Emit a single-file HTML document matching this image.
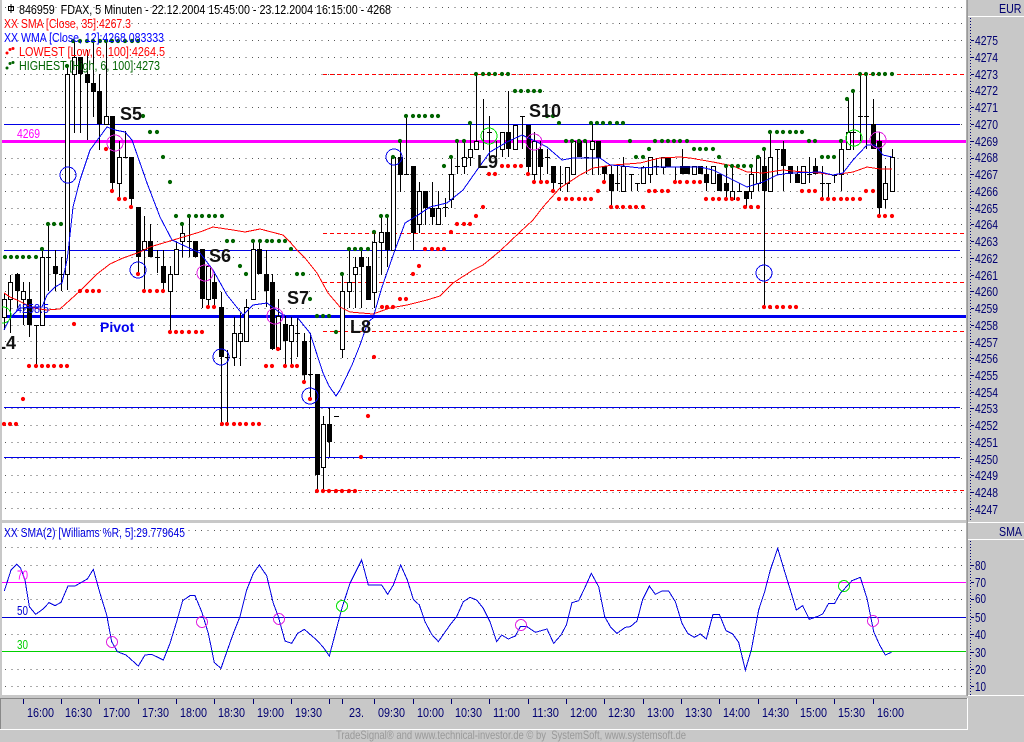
<!DOCTYPE html>
<html><head><meta charset="utf-8"><title>FDAX</title>
<style>
html,body{margin:0;padding:0;background:#c8c8c8;width:1024px;height:742px;overflow:hidden}
svg{display:block}
text{font-family:"Liberation Sans",Arial,sans-serif;font-size:13px;white-space:pre}
.b{font-weight:bold;font-size:18px;fill:#111}
.a text,.a{fill:#000070}
</style></head><body>
<svg width="1024" height="742" viewBox="0 0 1024 742" xmlns="http://www.w3.org/2000/svg">
<rect width="1024" height="742" fill="#c8c8c8"/>
<rect x="2" y="0" width="965" height="520" fill="#fff"/>
<rect x="2" y="523" width="965" height="172" fill="#fff"/>

<!-- dotted grids -->
<path shape-rendering="crispEdges" stroke="#555" stroke-width="1" stroke-dasharray="1 5.33" fill="none" d="M5 7.5H965M5 23.5H965M5 40.5H965M5 57.5H965M5 74.5H965M5 91.5H965M5 107.5H965M5 124.5H965M5 141.5H965M5 158.5H965M5 174.5H965M5 191.5H965M5 208.5H965M5 224.5H965M5 241.5H965M5 257.5H965M5 274.5H965M5 291.5H965M5 308.5H965M5 325.5H965M5 341.5H965M5 358.5H965M5 375.5H965M5 392.5H965M5 408.5H965M5 425.5H965M5 442.5H965M5 458.5H965M5 475.5H965M5 492.5H965M5 508.5H965M5 530.5H965M5 547.5H965M5 565.5H965M5 599.5H965M5 634.5H965M5 669.5H965M5 686.5H965"/>

<!-- horizontal levels -->
<path shape-rendering="crispEdges" stroke="#0000e6" stroke-width="1" fill="none" d="M4 124.5H960M4 250.5H960M4 407.5H960M4 457.5H960"/>
<path shape-rendering="crispEdges" stroke="#f00" stroke-width="1" stroke-dasharray="4 3" fill="none" d="M323 74.5H966M323 233.5H966M323 282.5H966M323 331.5H966M323 490.5H966"/>
<rect x="1" y="140" width="965" height="3" fill="#ff00ff"/>
<rect x="1" y="315" width="965" height="3" fill="#0000f0"/>

<!-- wicks -->
<path shape-rendering="crispEdges" stroke="#000" stroke-width="1" fill="none" d="M4.5 293V330M10.5 275V333M17.5 273V308M23.5 282V325M29.5 282V337M36.5 325V365M34 325.5h5M42.5 250V325M48.5 224V291M46 257.5h5M55.5 250V291M61.5 257V291M59 274.5h5M67.5 65V290M74.5 40V133M80.5 57V133M87.5 50V140M93.5 40V117M99.5 74V150M106.5 40V124M112.5 116V190M119.5 141V198M125.5 131V157M123 157.5h5M131.5 157V207M138.5 207V275M144.5 216V290M150.5 224V257M157.5 250V273M155 257.5h5M163.5 250V291M170.5 266V332M176.5 242V274M182.5 224V257M189.5 217V257M187 241.5h5M195.5 241V257M202.5 249V308M208.5 266V308M214.5 274V308M221.5 292V424M227.5 350V424M225 357.5h5M234.5 317V366M240.5 313V366M246.5 299V341M253.5 241V299M259.5 241V274M266.5 250V307M272.5 274V350M278.5 299V349M285.5 316V367M291.5 317V367M297.5 318V357M295 333.5h5M304.5 333V382M310.5 333V397M308 374.5h5M317.5 374V490M323.5 416V491M329.5 408V457M334 416.5h5M342.5 273V358M349.5 249V308M355.5 257V308M361.5 249V308M368.5 257V300M374.5 232V308M381.5 216V275M387.5 216V267M393.5 157V250M400.5 140V192M406.5 116V174M404 174.5h5M413.5 166V250M419.5 182V233M425.5 191V225M432.5 182V225M438.5 191V224M445.5 198V217M443 207.5h5M451.5 157V208M457.5 141V174M455 166.5h5M464.5 141V174M470.5 123V166M476.5 74V149M483.5 99V150M489.5 116V157M487 132.5h5M496.5 141V157M502.5 132V157M508.5 91V157M515.5 125V149M522.5 116V149M520 116.5h5M528.5 125V175M534.5 132V182M540.5 141V182M547.5 149V174M545 157.5h5M553.5 166V191M560.5 166V191M558 183.5h5M567.5 167V192M573.5 141V175M579.5 141V157M586.5 141V174M584 157.5h5M592.5 123V175M598.5 141V175M604.5 166V183M611.5 166V207M617.5 166V191M615 183.5h5M623.5 157V191M631.5 174V191M629 174.5h5M637.5 183V191M635 183.5h5M643.5 166V183M650.5 157V183M656.5 158V175M654 166.5h5M663.5 157V174M668.5 157V167M675.5 167V182M682.5 149V174M706.5 166V191M719.5 174V191M726.5 166V199M732.5 166V199M739.5 183V191M737 191.5h5M746.5 191V207M751.5 166V199M758.5 157V191M764.5 149V307M770.5 132V191M777.5 149V175M775 149.5h5M783.5 141V191M790.5 166V183M797.5 166V183M809.5 157V183M807 174.5h5M815.5 158V174M822.5 166V198M820 183.5h5M828.5 183V198M826 183.5h5M834.5 175V183M832 175.5h5M841.5 141V191M848.5 99V150M853.5 91V150M851 132.5h5M860.5 74V141M858 116.5h5M866.5 74V149M864 116.5h5M873.5 99V149M879.5 132V215M885.5 166V208M892.5 149V191"/>

<!-- white bodies -->
<path shape-rendering="crispEdges" stroke="#000" stroke-width="1" fill="#fff" d="M2.5 299.5h4v18h-4zM8.5 282.5h4v17h-4zM21.5 291.5h4v8h-4zM40.5 257.5h4v68h-4zM65.5 74.5h4v200h-4zM72.5 57.5h4v17h-4zM104.5 116.5h4v8h-4zM117.5 157.5h4v26h-4zM142.5 241.5h4v8h-4zM168.5 274.5h4v17h-4zM174.5 249.5h4v25h-4zM180.5 233.5h4v8h-4zM206.5 266.5h4v33h-4zM232.5 333.5h4v24h-4zM238.5 333.5h4v8h-4zM244.5 307.5h4v34h-4zM251.5 249.5h4v50h-4zM276.5 316.5h4v33h-4zM289.5 325.5h4v16h-4zM321.5 424.5h4v43h-4zM340.5 291.5h4v58h-4zM347.5 282.5h4v9h-4zM353.5 267.5h4v7h-4zM372.5 242.5h4v50h-4zM379.5 232.5h4v10h-4zM391.5 157.5h4v93h-4zM417.5 191.5h4v33h-4zM436.5 208.5h4v16h-4zM449.5 174.5h4v25h-4zM462.5 157.5h4v9h-4zM468.5 149.5h4v8h-4zM474.5 141.5h4v8h-4zM500.5 132.5h4v17h-4zM513.5 125.5h4v24h-4zM532.5 141.5h4v33h-4zM565.5 167.5h4v16h-4zM571.5 141.5h4v33h-4zM590.5 141.5h4v8h-4zM621.5 166.5h4v25h-4zM641.5 167.5h4v16h-4zM648.5 157.5h4v17h-4zM661.5 157.5h4v10h-4zM692.5 166.5h4v8h-4zM711.5 166.5h4v17h-4zM730.5 191.5h4v8h-4zM749.5 174.5h4v17h-4zM756.5 157.5h4v26h-4zM768.5 157.5h4v34h-4zM801.5 166.5h4v17h-4zM839.5 149.5h4v25h-4zM846.5 132.5h4v17h-4zM883.5 183.5h4v16h-4zM890.5 157.5h4v34h-4z"/>

<!-- black bodies -->
<path shape-rendering="crispEdges" fill="#000" d="M15 274h5v17h-5zM27 299h5v26h-5zM53 266h5v8h-5zM78 57h5v17h-5zM85 74h5v9h-5zM91 83h5v9h-5zM97 91h5v33h-5zM110 116h5v67h-5zM129 157h5v42h-5zM136 207h5v50h-5zM148 241h5v16h-5zM161 266h5v17h-5zM193 241h5v16h-5zM200 249h5v50h-5zM212 282h5v17h-5zM219 307h5v50h-5zM257 249h5v25h-5zM264 274h5v17h-5zM270 282h5v67h-5zM283 324h5v17h-5zM302 341h5v34h-5zM315 374h5v101h-5zM327 424h5v18h-5zM359 257h5v10h-5zM366 266h5v34h-5zM385 232h5v18h-5zM398 157h5v18h-5zM411 166h5v67h-5zM423 191h5v17h-5zM430 208h5v9h-5zM506 132h5v17h-5zM526 125h5v42h-5zM538 149h5v18h-5zM551 166h5v17h-5zM577 141h5v16h-5zM596 141h5v17h-5zM602 166h5v8h-5zM609 174h5v17h-5zM666 157h5v10h-5zM680 166h5v8h-5zM685 166h5v8h-5zM698 166h5v8h-5zM704 174h5v9h-5zM717 174h5v17h-5zM724 183h5v8h-5zM744 191h5v8h-5zM762 166h5v25h-5zM781 149h5v17h-5zM788 166h5v8h-5zM795 174h5v9h-5zM813 166h5v8h-5zM871 124h5v25h-5zM877 141h5v67h-5z"/>

<!-- SMA red / WMA blue -->
<polyline shape-rendering="crispEdges" fill="none" stroke="#f00" stroke-width="1" points="4,293 10,297 17,300 23,303 33,308 47,310 60,309 80,291 97,274 110,264 123,258 140,252 150,247 180,238 200,232 213,227 233,230 245,232 260,229 283,235 290,242 297,250 305,258 317,273 328,293 340,307 350,312 373,314 390,308 407,305 427,300 440,296 453,283 473,270 483,265 500,251 520,232 533,220 543,207 560,188 580,175 593,168 613,165 640,163 660,158 680,157 690,158 713,162 733,166 747,172 763,173 783,170 803,172 820,173 833,175 853,172 867,167 880,169 892,169"/>
<polyline shape-rendering="crispEdges" fill="none" stroke="#0000f0" stroke-width="1" points="4,330 10,318 20,308 33,307 42,307 47,295 55,287 62,283 67,260 68,253 73,207 80,180 90,150 107,127 115,130 125,132 132,140 147,183 160,217 172,240 187,247 200,253 213,270 227,295 243,315 253,305 267,303 283,315 297,317 310,333 323,373 329,386 336,396 340,390 352,365 360,345 368,322 373,318 382,287 395,250 405,223 418,215 430,207 447,203 463,190 477,170 490,152 507,142 522,135 533,140 547,147 562,160 573,158 588,158 600,158 610,165 623,166 640,168 657,167 680,167 700,167 713,170 727,177 747,187 763,182 777,175 790,173 820,172 833,175 843,173 853,160 867,145 875,145 883,155 892,157"/>

<!-- green dots -->
<path fill="none" stroke="#006400" stroke-width="4.2" stroke-linecap="round" d="M73 41h0M80 41h0M87 41h0M93 41h0M100 41h0M106 41h0M112 41h0M118 41h0M125 41h0M132 41h0M138 41h0M67 66h0M143 116h0M150 132h0M157 132h0M163 157h0M170 182h0M48 224h0M54 224h0M61 224h0M176 216h0M189 216h0M196 216h0M202 216h0M209 216h0M215 216h0M222 216h0M182 224h0M42 249h0M227 241h0M233 241h0M253 241h0M260 241h0M267 241h0M272 241h0M279 241h0M285 241h0M291 249h0M5 257h0M11 257h0M17 257h0M23 257h0M29 257h0M36 257h0M240 266h0M246 274h0M297 274h0M303 274h0M310 299h0M317 316h0M323 316h0M329 316h0M336 332h0M342 274h0M349 249h0M355 249h0M361 249h0M368 249h0M374 232h0M381 216h0M387 216h0M393 157h0M400 141h0M406 116h0M413 116h0M419 116h0M425 116h0M432 116h0M438 116h0M444 166h0M451 157h0M457 141h0M464 141h0M470 123h0M476 74h0M483 74h0M489 74h0M495 74h0M502 74h0M508 74h0M515 91h0M521 91h0M528 91h0M534 91h0M540 91h0M547 116h0M553 116h0M559 123h0M566 141h0M572 141h0M579 141h0M585 141h0M591 123h0M597 123h0M603 123h0M610 123h0M617 123h0M623 123h0M630 141h0M636 157h0M643 157h0M649 149h0M655 141h0M662 141h0M668 141h0M674 141h0M680 141h0M687 141h0M694 149h0M700 149h0M706 149h0M713 149h0M719 157h0M726 166h0M732 166h0M738 166h0M744 166h0M751 166h0M758 157h0M764 149h0M770 132h0M777 132h0M783 132h0M790 132h0M796 132h0M802 132h0M809 141h0M815 141h0M822 157h0M828 157h0M834 157h0M841 141h0M847 99h0M853 91h0M860 74h0M866 74h0M873 74h0M879 74h0M885 74h0M892 74h0"/>

<!-- red dots -->
<path fill="none" stroke="#f00" stroke-width="4.2" stroke-linecap="round" d="M106 149h0M112 191h0M119 199h0M125 199h0M131 207h0M138 274h0M80 291h0M87 291h0M93 291h0M99 291h0M144 291h0M150 291h0M157 291h0M163 291h0M74 324h0M170 332h0M176 332h0M182 332h0M189 332h0M196 332h0M202 332h0M208 307h0M214 307h0M29 366h0M36 366h0M42 366h0M48 366h0M54 366h0M61 366h0M67 366h0M23 399h0M4 424h0M10 424h0M16 424h0M222 424h0M227 424h0M234 424h0M240 424h0M246 424h0M253 424h0M259 424h0M266 366h0M272 366h0M278 349h0M285 366h0M292 366h0M297 366h0M304 382h0M310 399h0M317 491h0M323 491h0M329 491h0M336 491h0M342 491h0M349 491h0M355 491h0M361 457h0M368 416h0M374 357h0M382 307h0M387 307h0M393 307h0M400 299h0M406 299h0M413 274h0M419 266h0M425 249h0M432 249h0M438 249h0M444 249h0M451 232h0M457 224h0M464 224h0M470 224h0M476 216h0M483 207h0M489 174h0M495 174h0M502 166h0M508 166h0M515 166h0M521 166h0M528 174h0M534 182h0M541 182h0M547 182h0M553 191h0M559 199h0M566 199h0M572 199h0M579 199h0M585 199h0M591 199h0M598 191h0M604 182h0M611 207h0M617 207h0M623 207h0M630 207h0M636 207h0M643 207h0M649 191h0M655 191h0M662 191h0M668 191h0M675 182h0M680 182h0M687 182h0M694 182h0M700 182h0M706 199h0M713 199h0M719 199h0M726 199h0M732 199h0M738 199h0M745 207h0M751 207h0M758 207h0M764 307h0M770 307h0M777 307h0M783 307h0M790 307h0M796 307h0M802 191h0M809 191h0M815 191h0M822 199h0M828 199h0M834 199h0M841 199h0M847 199h0M853 199h0M860 199h0M866 191h0M873 191h0M879 216h0M885 216h0M892 216h0"/>

<!-- signal circles -->
<g fill="none" stroke-width="1" shape-rendering="crispEdges">
<g stroke="#0000f0"><circle cx="68" cy="175" r="8"/><circle cx="138" cy="270" r="8"/><circle cx="221" cy="357" r="8"/><circle cx="310" cy="396" r="8"/><circle cx="394" cy="157" r="8"/><circle cx="764" cy="273" r="8"/></g>
<g stroke="#e020e0"><circle cx="115" cy="143" r="8"/><circle cx="205" cy="273" r="8"/><circle cx="275" cy="316" r="8"/><circle cx="534" cy="142" r="8"/><circle cx="878" cy="140" r="8"/></g>
<g stroke="#00e000"><circle cx="3" cy="315" r="8"/><circle cx="489" cy="136" r="8"/><circle cx="854" cy="138" r="8"/></g>
</g>

<!-- legend -->
<path shape-rendering="crispEdges" d="M8.5 6.5h5v4h-5zM11 4v9" fill="none" stroke="#000" stroke-width="1"/>
<text x="19" y="14" fill="#000" textLength="372" lengthAdjust="spacingAndGlyphs">846959  FDAX, 5 Minuten - 22.12.2004 15:45:00 - 23.12.2004 16:15:00 - 4268</text>
<text x="4" y="28" fill="#f00" textLength="127" lengthAdjust="spacingAndGlyphs">XX SMA [Close, 35]:4267.3</text>
<text x="4" y="42" fill="#00f" textLength="160" lengthAdjust="spacingAndGlyphs">XX WMA [Close, 12]:4268.083333</text>
<path d="M7 53h0M10 49.5h0M13 48.5h0" stroke="#f00" stroke-width="3" stroke-linecap="round" fill="none"/>
<text x="19" y="56" fill="#f00" textLength="146" lengthAdjust="spacingAndGlyphs">LOWEST [Low, 6, 100]:4264.5</text>
<path d="M7 68h0M10 63.5h0M13 62.5h0" stroke="#006400" stroke-width="3" stroke-linecap="round" fill="none"/>
<text x="19" y="70" fill="#006400" textLength="141" lengthAdjust="spacingAndGlyphs">HIGHEST [High, 6, 100]:4273</text>

<text x="17" y="138" fill="#ff00ff" textLength="23" lengthAdjust="spacingAndGlyphs">4269</text>
<text x="16" y="313" fill="#0000f0" textLength="33" lengthAdjust="spacingAndGlyphs">4258.5</text>
<text x="100" y="332" fill="#0000f0" font-weight="bold" style="font-size:14px">Pivot</text>
<text class="b" x="120" y="120">S5</text>
<text class="b" x="209" y="262">S6</text>
<text class="b" x="287" y="304">S7</text>
<text class="b" x="529" y="117">S10</text>
<text class="b" x="477" y="168">L9</text>
<text class="b" x="350" y="333">L8</text>
<text class="b" x="-5" y="349">L4</text>

<!-- lower panel -->
<rect x="2" y="582" width="964" height="1" fill="#ff00ff"/>
<rect x="2" y="617" width="964" height="1" fill="#0000d0"/>
<rect x="2" y="651" width="964" height="1" fill="#00d000"/>
<g transform="translate(0,510) scale(.33333)" fill="none" stroke="#0000e0" stroke-width="1" shape-rendering="crispEdges">
<polyline vector-effect="non-scaling-stroke" points="13,243 33,180 50,163 62,175 75,210 88,290 107,313 128,298 147,278 165,287 183,277 204,228 225,228 262,207 280,178 300,250 320,315 335,395 352,425 378,435 415,468 435,435 455,433 490,450 510,400 530,335 548,272 570,257 585,257 605,305 625,370 643,458 663,475 700,370 720,320 740,240 760,190 778,165 800,197 820,280 835,320 855,393 875,400 893,370 913,358 950,390 970,412 988,438 1027,290 1050,220 1085,150 1105,225 1145,225 1163,253 1180,225 1202,165 1222,210 1240,268 1258,285 1275,335 1295,373 1315,395 1350,345 1370,320 1390,275 1410,262 1430,270 1450,295 1470,335 1490,395 1505,375 1525,387 1536,382"/>
</g>
<g transform="translate(512,510) scale(.33333)" fill="none" stroke="#0000e0" stroke-width="1" shape-rendering="crispEdges">
<polyline vector-effect="non-scaling-stroke" points="0,382 10,378 25,350 45,350 70,367 105,357 125,400 147,375 163,345 180,278 200,272 220,230 238,190 260,230 278,320 295,350 315,370 340,352 355,350 375,333 392,268 412,228 430,253 450,243 470,243 490,275 510,340 527,370 547,382 565,372 583,387 603,313 622,313 642,362 662,372 680,397 700,480 718,420 740,300 758,245 775,180 797,115 815,175 835,240 853,300 872,287 892,328 915,320 932,312 950,280 968,280 985,250 1020,212 1045,202 1065,265 1085,365 1103,405 1120,435 1138,427"/>
</g>
<g fill="none" stroke-width="1" shape-rendering="crispEdges">
<g stroke="#e020e0"><circle cx="112" cy="642" r="5.5"/><circle cx="202" cy="622" r="5.5"/><circle cx="279" cy="619" r="5.5"/><circle cx="521" cy="625" r="5.5"/><circle cx="873" cy="621" r="5.5"/></g>
<g stroke="#00e000"><circle cx="342" cy="606" r="5.5"/><circle cx="844" cy="586" r="5.5"/></g>
</g>
<text x="4" y="537" fill="#0000e0" textLength="181" lengthAdjust="spacingAndGlyphs">XX SMA(2) [Williams %R, 5]:29.779645</text>
<text x="17" y="579.5" fill="#ff00ff" textLength="11" lengthAdjust="spacingAndGlyphs">70</text>
<text x="17" y="615" fill="#0000d0" textLength="11" lengthAdjust="spacingAndGlyphs">50</text>
<text x="17" y="649" fill="#00d000" textLength="11" lengthAdjust="spacingAndGlyphs">30</text>

<!-- frames -->
<rect x="0" y="0" width="2" height="695" fill="#c8c8c8"/>
<rect x="0" y="520" width="967" height="3" fill="#c8c8c8"/>
<rect x="966" y="0" width="58" height="742" fill="#c8c8c8"/>
<rect x="966.5" y="0" width="1.5" height="696" fill="#999"/>
<rect x="968" y="16" width="56" height="1" fill="#fff"/>
<rect x="968" y="539" width="56" height="1" fill="#fff"/>
<rect x="968" y="522" width="56" height="1" fill="#fff"/>
<rect x="968" y="695" width="56" height="1" fill="#fff"/>
<path shape-rendering="crispEdges" stroke="#000070" stroke-width="1" stroke-dasharray="1 2" fill="none" d="M970.5 18V520M970.5 541V695"/>
<path shape-rendering="crispEdges" stroke="#000070" stroke-width="1" fill="none" d="M971 40.5h3M971 57.5h3M971 74.5h3M971 91.5h3M971 107.5h3M971 124.5h3M971 141.5h3M971 158.5h3M971 174.5h3M971 191.5h3M971 208.5h3M971 224.5h3M971 241.5h3M971 258.5h3M971 275.5h3M971 291.5h3M971 308.5h3M971 325.5h3M971 342.5h3M971 358.5h3M971 375.5h3M971 392.5h3M971 408.5h3M971 425.5h3M971 442.5h3M971 459.5h3M971 475.5h3M971 492.5h3M971 509.5h3M971 565.5h3M971 582.5h3M971 599.5h3M971 617.5h3M971 634.5h3M971 652.5h3M971 669.5h3M971 686.5h3"/>
<g class="a">
<text x="999" y="13" textLength="22.5" lengthAdjust="spacingAndGlyphs">EUR</text>
<text x="999" y="536" textLength="23" lengthAdjust="spacingAndGlyphs">SMA</text>
<text x="975" y="45" textLength="23" lengthAdjust="spacingAndGlyphs">4275</text>
<text x="975" y="62" textLength="23" lengthAdjust="spacingAndGlyphs">4274</text>
<text x="975" y="79" textLength="23" lengthAdjust="spacingAndGlyphs">4273</text>
<text x="975" y="95" textLength="23" lengthAdjust="spacingAndGlyphs">4272</text>
<text x="975" y="112" textLength="23" lengthAdjust="spacingAndGlyphs">4271</text>
<text x="975" y="129" textLength="23" lengthAdjust="spacingAndGlyphs">4270</text>
<text x="975" y="146" textLength="23" lengthAdjust="spacingAndGlyphs">4269</text>
<text x="975" y="162" textLength="23" lengthAdjust="spacingAndGlyphs">4268</text>
<text x="975" y="179" textLength="23" lengthAdjust="spacingAndGlyphs">4267</text>
<text x="975" y="196" textLength="23" lengthAdjust="spacingAndGlyphs">4266</text>
<text x="975" y="213" textLength="23" lengthAdjust="spacingAndGlyphs">4265</text>
<text x="975" y="229" textLength="23" lengthAdjust="spacingAndGlyphs">4264</text>
<text x="975" y="246" textLength="23" lengthAdjust="spacingAndGlyphs">4263</text>
<text x="975" y="263" textLength="23" lengthAdjust="spacingAndGlyphs">4262</text>
<text x="975" y="280" textLength="23" lengthAdjust="spacingAndGlyphs">4261</text>
<text x="975" y="296" textLength="23" lengthAdjust="spacingAndGlyphs">4260</text>
<text x="975" y="313" textLength="23" lengthAdjust="spacingAndGlyphs">4259</text>
<text x="975" y="330" textLength="23" lengthAdjust="spacingAndGlyphs">4258</text>
<text x="975" y="347" textLength="23" lengthAdjust="spacingAndGlyphs">4257</text>
<text x="975" y="363" textLength="23" lengthAdjust="spacingAndGlyphs">4256</text>
<text x="975" y="380" textLength="23" lengthAdjust="spacingAndGlyphs">4255</text>
<text x="975" y="397" textLength="23" lengthAdjust="spacingAndGlyphs">4254</text>
<text x="975" y="413" textLength="23" lengthAdjust="spacingAndGlyphs">4253</text>
<text x="975" y="430" textLength="23" lengthAdjust="spacingAndGlyphs">4252</text>
<text x="975" y="447" textLength="23" lengthAdjust="spacingAndGlyphs">4251</text>
<text x="975" y="464" textLength="23" lengthAdjust="spacingAndGlyphs">4250</text>
<text x="975" y="480" textLength="23" lengthAdjust="spacingAndGlyphs">4249</text>
<text x="975" y="497" textLength="23" lengthAdjust="spacingAndGlyphs">4248</text>
<text x="975" y="514" textLength="23" lengthAdjust="spacingAndGlyphs">4247</text>
<text x="975" y="570" textLength="11" lengthAdjust="spacingAndGlyphs">80</text>
<text x="975" y="587" textLength="11" lengthAdjust="spacingAndGlyphs">70</text>
<text x="975" y="603" textLength="11" lengthAdjust="spacingAndGlyphs">60</text>
<text x="975" y="622" textLength="11" lengthAdjust="spacingAndGlyphs">50</text>
<text x="975" y="639" textLength="11" lengthAdjust="spacingAndGlyphs">40</text>
<text x="975" y="657" textLength="11" lengthAdjust="spacingAndGlyphs">30</text>
<text x="975" y="674" textLength="11" lengthAdjust="spacingAndGlyphs">20</text>
<text x="975" y="691" textLength="11" lengthAdjust="spacingAndGlyphs">10</text>
</g>

<!-- time axis -->
<rect x="0" y="698" width="967" height="1" fill="#888"/>
<rect x="0" y="698" width="1" height="31" fill="#888"/>
<rect x="0" y="729" width="968" height="1" fill="#fff"/>
<rect x="967" y="698" width="1" height="32" fill="#fff"/>
<path shape-rendering="crispEdges" stroke="#000070" stroke-width="1" fill="none" d="M23.5 699v5M61.5 699v5M99.5 699v5M138.5 699v5M176.5 699v5M214.5 699v5M253.5 699v5M291.5 699v5M329.5 699v5M342.5 699v5M374.5 699v5M413.5 699v5M451.5 699v5M489.5 699v5M528.5 699v5M566.5 699v5M604.5 699v5M643.5 699v5M681.5 699v5M719.5 699v5M758.5 699v5M796.5 699v5M834.5 699v5M873.5 699v5"/>
<g class="a">
<text x="27" y="717" textLength="27" lengthAdjust="spacingAndGlyphs">16:00</text>
<text x="65" y="717" textLength="27" lengthAdjust="spacingAndGlyphs">16:30</text>
<text x="103" y="717" textLength="27" lengthAdjust="spacingAndGlyphs">17:00</text>
<text x="142" y="717" textLength="27" lengthAdjust="spacingAndGlyphs">17:30</text>
<text x="180" y="717" textLength="27" lengthAdjust="spacingAndGlyphs">18:00</text>
<text x="218" y="717" textLength="27" lengthAdjust="spacingAndGlyphs">18:30</text>
<text x="257" y="717" textLength="27" lengthAdjust="spacingAndGlyphs">19:00</text>
<text x="295" y="717" textLength="27" lengthAdjust="spacingAndGlyphs">19:30</text>
<text x="349" y="717" textLength="15" lengthAdjust="spacingAndGlyphs">23.</text>
<text x="378" y="717" textLength="27" lengthAdjust="spacingAndGlyphs">09:30</text>
<text x="417" y="717" textLength="27" lengthAdjust="spacingAndGlyphs">10:00</text>
<text x="455" y="717" textLength="27" lengthAdjust="spacingAndGlyphs">10:30</text>
<text x="493" y="717" textLength="27" lengthAdjust="spacingAndGlyphs">11:00</text>
<text x="532" y="717" textLength="27" lengthAdjust="spacingAndGlyphs">11:30</text>
<text x="570" y="717" textLength="27" lengthAdjust="spacingAndGlyphs">12:00</text>
<text x="608" y="717" textLength="27" lengthAdjust="spacingAndGlyphs">12:30</text>
<text x="647" y="717" textLength="27" lengthAdjust="spacingAndGlyphs">13:00</text>
<text x="685" y="717" textLength="27" lengthAdjust="spacingAndGlyphs">13:30</text>
<text x="723" y="717" textLength="27" lengthAdjust="spacingAndGlyphs">14:00</text>
<text x="762" y="717" textLength="27" lengthAdjust="spacingAndGlyphs">14:30</text>
<text x="800" y="717" textLength="27" lengthAdjust="spacingAndGlyphs">15:00</text>
<text x="838" y="717" textLength="27" lengthAdjust="spacingAndGlyphs">15:30</text>
<text x="877" y="717" textLength="27" lengthAdjust="spacingAndGlyphs">16:00</text>
</g>
<text x="336" y="739" fill="#999" style="font-size:12px" textLength="350" lengthAdjust="spacingAndGlyphs">TradeSignal® and www.technical-investor.de © by  SystemSoft, www.systemsoft.de</text>
</svg>
</body></html>
